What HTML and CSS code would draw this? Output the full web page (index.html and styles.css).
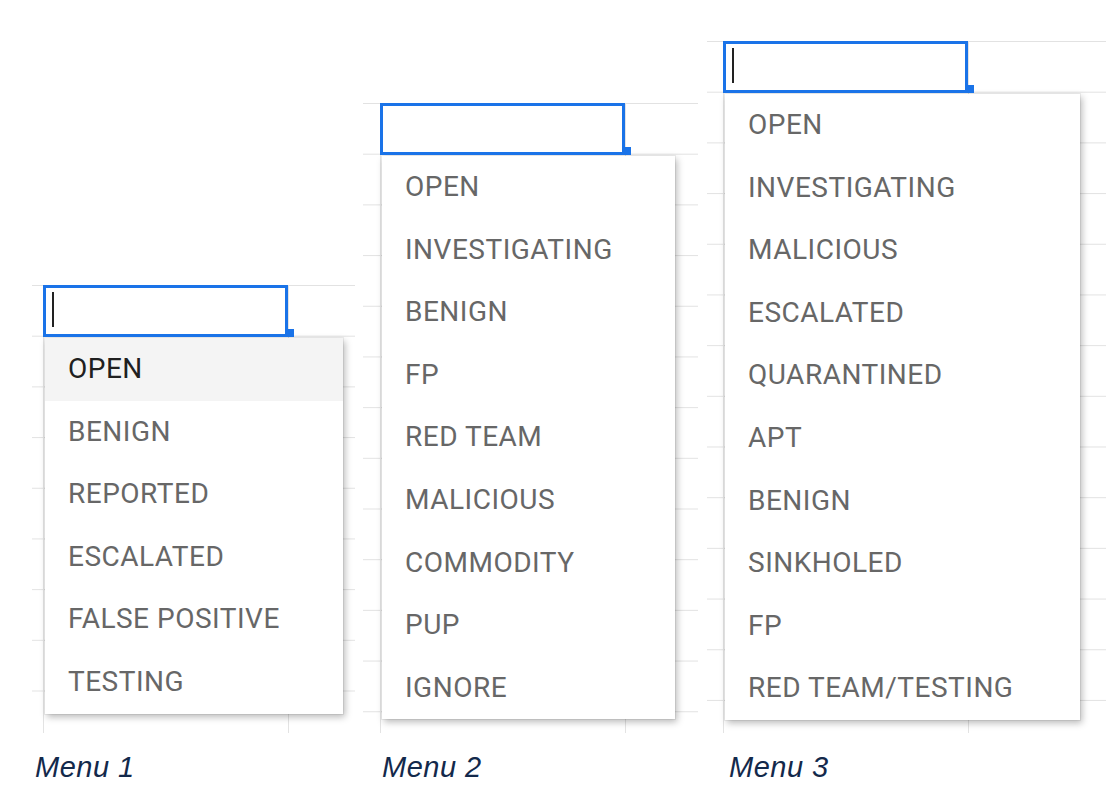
FILE: index.html
```html
<!DOCTYPE html>
<html lang="en">
<head>
<meta charset="utf-8">
<title>Menus</title>
<link rel="stylesheet" href="styles.css">
</head>
<body>
<div class="page">
  <section class="col col-1">
    <div class="sheet sheet-1">
      <div class="cell"><span class="caret"></span></div>
      <ul class="menu menu-1">
        <li class="item active">OPEN</li>
        <li class="item">BENIGN</li>
        <li class="item">REPORTED</li>
        <li class="item">ESCALATED</li>
        <li class="item">FALSE POSITIVE</li>
        <li class="item">TESTING</li>
      </ul>
    </div>
    <p class="caption caption-1">Menu 1</p>
  </section>
  <section class="col col-2">
    <div class="sheet sheet-2">
      <div class="cell"></div>
      <ul class="menu menu-2">
        <li class="item">OPEN</li>
        <li class="item">INVESTIGATING</li>
        <li class="item">BENIGN</li>
        <li class="item">FP</li>
        <li class="item">RED TEAM</li>
        <li class="item">MALICIOUS</li>
        <li class="item">COMMODITY</li>
        <li class="item">PUP</li>
        <li class="item">IGNORE</li>
      </ul>
    </div>
    <p class="caption caption-2">Menu 2</p>
  </section>
  <section class="col col-3">
    <div class="sheet sheet-3">
      <div class="cell"><span class="caret"></span></div>
      <ul class="menu menu-3">
        <li class="item">OPEN</li>
        <li class="item">INVESTIGATING</li>
        <li class="item">MALICIOUS</li>
        <li class="item">ESCALATED</li>
        <li class="item">QUARANTINED</li>
        <li class="item">APT</li>
        <li class="item">BENIGN</li>
        <li class="item">SINKHOLED</li>
        <li class="item">FP</li>
        <li class="item">RED TEAM/TESTING</li>
      </ul>
    </div>
    <p class="caption caption-3">Menu 3</p>
  </section>
</div>
</body>
</html>
```
FILE: styles.css
```css
html, body {
  margin: 0;
  padding: 0;
  background: #ffffff;
}

.page {
  display: flex;
  align-items: flex-end;
  box-sizing: border-box;
  height: 784px;
  padding-left: 32px;
  font-family: Roboto, "Liberation Sans", sans-serif;
}

.col {
  display: flex;
  flex-direction: column;
}

.col-1 { width: 323px; margin-right: 8px; }
.col-2 { width: 335px; margin-right: 9px; }
.col-3 { width: 399px; }

.sheet {
  box-sizing: border-box;
  background-image:
    linear-gradient(to right, #e3e3e3 1px, transparent 1px),
    linear-gradient(to right, #e3e3e3 1px, transparent 1px),
    linear-gradient(to bottom, #e2e2e2 1px, transparent 1px);
  background-size: 1px 100%, 1px 100%, 100% 50.7px;
  background-repeat: no-repeat, no-repeat, repeat-y;
}

.sheet-1 {
  height: 448px;
  padding-left: 11px;
  background-position: 11px 0, 256px 0, 0 0;
}

.sheet-2 {
  height: 630px;
  padding-left: 17px;
  background-position: 17px 0, 262px 0, 0 0;
}

.sheet-3 {
  height: 692px;
  padding-left: 16px;
  background-position: 16px 0, 261px 0, 0 0;
}

.cell {
  position: relative;
  box-sizing: border-box;
  width: 245px;
  height: 52px;
  border: 3px solid #1a73e8;
  background: #ffffff;
}

.cell::after {
  content: "";
  position: absolute;
  right: -9px;
  bottom: -3px;
  width: 8px;
  height: 8px;
  background: #1a73e8;
}

.caret {
  display: block;
  width: 2px;
  height: 35px;
  margin: 4px 0 0 6px;
  background: #222222;
}

.menu {
  list-style: none;
  margin: 1px 0 0 2px;
  padding: 0;
  background: #ffffff;
  box-shadow: 0 0 0 1px rgba(0, 0, 0, 0.06), 2px 3px 7px rgba(0, 0, 0, 0.28);
}

.menu-1 { width: 298px; }
.menu-2 { width: 293px; }
.menu-3 { width: 355px; }

.item {
  height: 62.6px;
  line-height: 62.6px;
  padding-left: 23px;
  font-size: 28px;
  letter-spacing: 0.5px;
  color: #676767;
  white-space: nowrap;
}

.item.active {
  background: #f4f4f4;
  color: #202020;
}

.caption {
  margin: 17px 0 0;
  line-height: 34px;
  font-family: "Liberation Sans", Arial, sans-serif;
  font-style: italic;
  font-size: 29px;
  letter-spacing: 0.5px;
  color: #13294b;
}

.caption-1 { padding-left: 3px; }
.caption-2 { padding-left: 19px; }
.caption-3 { padding-left: 22px; }
```
